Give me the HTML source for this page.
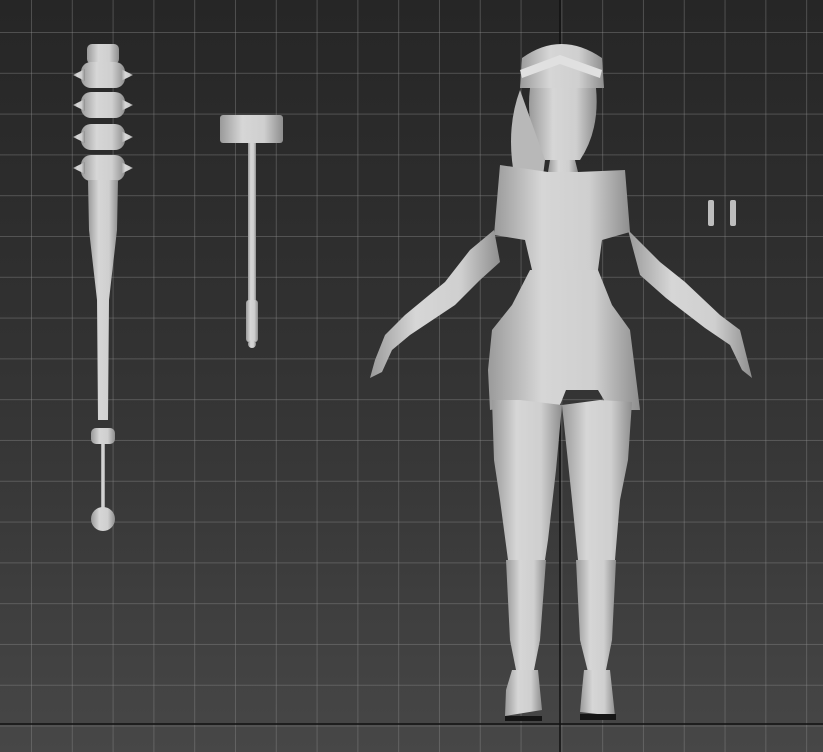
<!DOCTYPE html>
<html><head><style>
html,body{margin:0;padding:0;}
body{width:823px;height:752px;overflow:hidden;position:relative;
background:linear-gradient(#262626 0%,#303030 40%,#3c3c3c 75%,#474747 100%);}
.grid{position:absolute;inset:0;
background-image:linear-gradient(90deg,rgba(140,140,140,.4) 1px,transparent 1px),linear-gradient(rgba(140,140,140,.4) 1px,transparent 1px);
background-size:40.8px 40.8px;background-position:31px 32px;}
svg{position:absolute;left:0;top:0;}
</style></head><body>
<div class="grid"></div>
<svg width="823" height="752" viewBox="0 0 823 752">
<defs>
<linearGradient id="g" x1="0" x2="1"><stop offset="0" stop-color="#9a9a9a"/><stop offset=".35" stop-color="#d6d6d6"/><stop offset=".7" stop-color="#cfcfcf"/><stop offset="1" stop-color="#8e8e8e"/></linearGradient>
</defs>
<line x1="560" y1="0" x2="560" y2="752" stroke="#111" stroke-width="1.5"/>
<line x1="0" y1="724" x2="823" y2="724" stroke="#111" stroke-width="1.5"/>
<g fill="url(#g)">
<rect x="87" y="44" width="32" height="20" rx="5"/>
<rect x="81" y="62" width="44" height="26" rx="10"/>
<rect x="81" y="92" width="44" height="26" rx="10"/>
<rect x="81" y="124" width="44" height="26" rx="10"/>
<rect x="81" y="155" width="44" height="26" rx="10"/>
<polygon points="73,75 85,69 85,81"/><polygon points="133,75 121,69 121,81"/>
<polygon points="73,105 85,99 85,111"/><polygon points="133,105 121,99 121,111"/>
<polygon points="73,137 85,131 85,143"/><polygon points="133,137 121,131 121,143"/>
<polygon points="73,168 85,162 85,174"/><polygon points="133,168 121,162 121,174"/>
<path d="M88,180 L118,180 L117,230 L109,300 L108,420 L98,420 L97,300 L89,230 Z"/>
<rect x="91" y="428" width="24" height="16" rx="5"/>
<rect x="101" y="444" width="4" height="66"/>
<circle cx="103" cy="519" r="12"/>
</g>
<g fill="url(#g)">
<rect x="220" y="115" width="63" height="28" rx="3"/>
<rect x="248" y="143" width="8" height="160"/>
<rect x="246" y="300" width="12" height="42" rx="3"/>
<circle cx="252" cy="344" r="4"/>
</g>
<g fill="#bdbdbd"><rect x="708" y="200" width="6" height="26" rx="2"/><rect x="730" y="200" width="6" height="26" rx="2"/></g>
<g fill="url(#g)">
<path d="M522,58 Q561,30 602,58 L604,88 L520,88 Z"/>
<path d="M530,88 Q525,130 545,160 L580,160 Q600,130 596,88 Z"/>
<path d="M520,90 Q505,130 515,180 L540,200 L545,160 Z" fill="#b8b8b8"/>
<path d="M550,160 L575,160 L578,172 L548,172 Z"/>
<path d="M500,165 L548,172 L578,172 L625,170 L630,232 L602,240 L598,270 L532,270 L525,240 L494,235 Z"/>
<path d="M494,230 L470,250 L445,282 L405,315 L385,335 L375,360 L370,378 L382,372 L392,350 L410,335 L455,305 L480,280 L500,262 Z"/>
<path d="M628,230 L660,262 L685,282 L720,315 L740,330 L752,378 L742,370 L730,345 L705,328 L666,298 L640,275 Z"/>
<path d="M530,270 L598,270 L612,305 L630,330 L640,410 L610,410 L598,390 L566,390 L560,405 L520,405 L490,410 L488,370 L492,330 L512,305 Z"/>
<path d="M492,400 L520,400 L562,405 L556,470 L548,540 L545,560 L508,560 L500,500 L494,460 Z"/>
<path d="M562,405 L600,400 L632,402 L628,460 L620,500 L615,560 L578,560 L572,500 Z"/>
<path d="M506,560 L546,560 L540,640 L532,680 L518,680 L510,640 Z"/>
<path d="M576,560 L616,560 L612,640 L604,680 L590,680 L580,640 Z"/>
<path d="M512,670 L538,670 L542,710 L505,716 L506,690 Z"/>
<path d="M584,670 L610,670 L615,716 L580,712 L582,690 Z"/>
</g>
<path d="M505,716 L542,716 L542,721 L505,721 Z M580,714 L616,714 L616,720 L580,720 Z" fill="#151515"/>
<path d="M520,70 L560,55 L602,70 L600,78 L560,64 L522,78 Z" fill="#e0e0e0"/>
</svg>
</body></html>
